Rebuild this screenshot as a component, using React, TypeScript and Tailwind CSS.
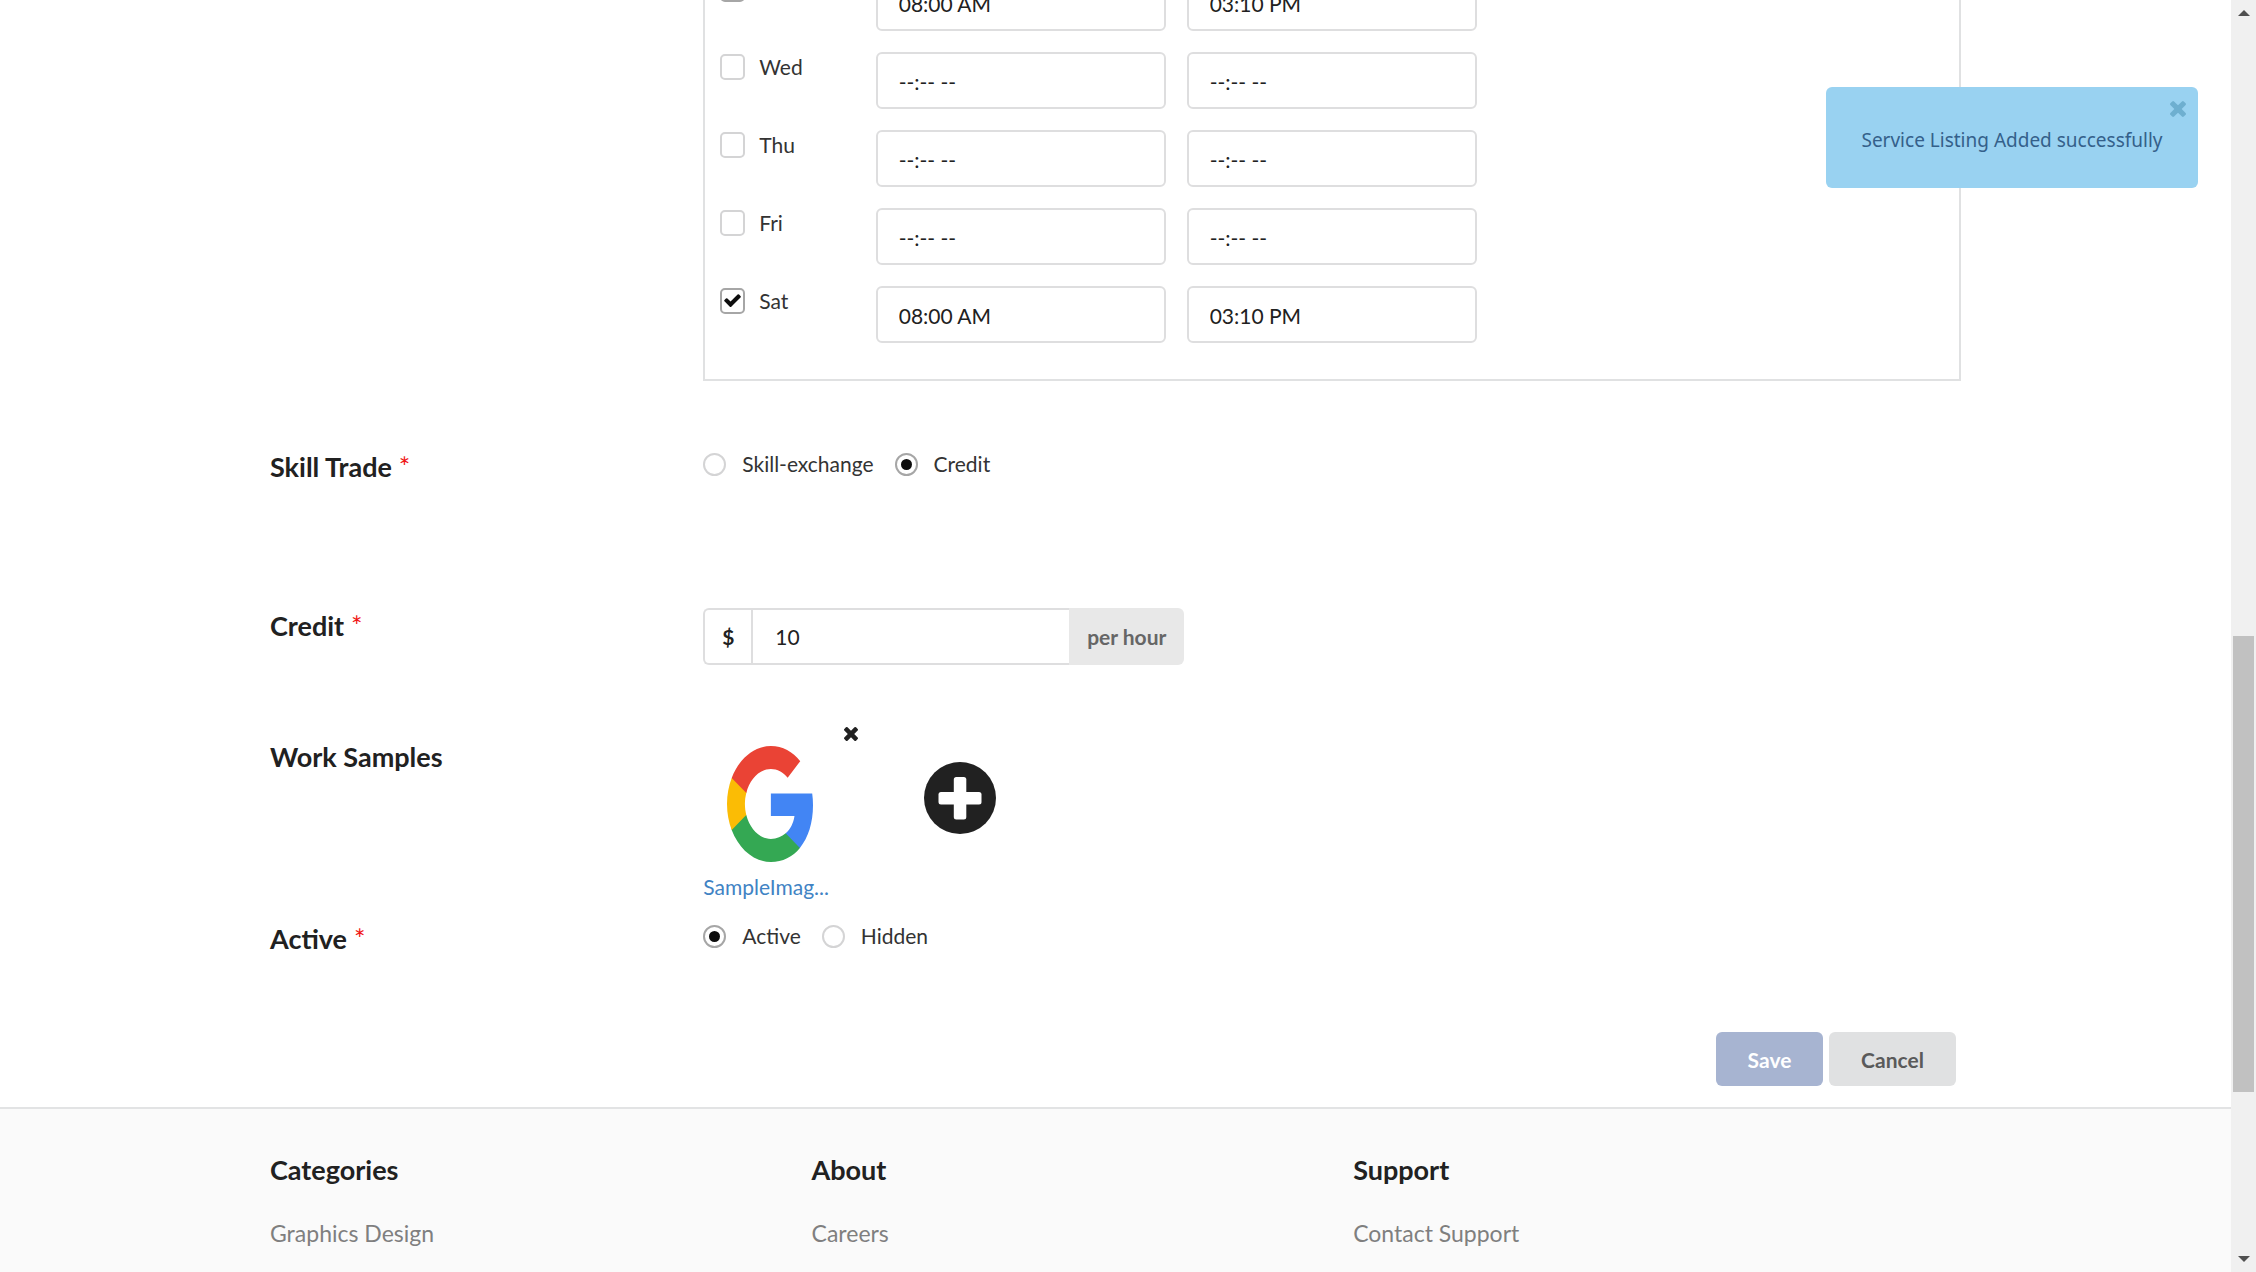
import { useState, type ReactNode } from "react";

function TimesIcon({ className }: { className: string }) {
  return (
    <svg viewBox="302 366 1188 1188" className={className} fill="currentColor" aria-hidden="true">
      <path d="M1490 1322q0 40-28 68l-136 136q-28 28-68 28t-68-28l-294-294-294 294q-28 28-68 28t-68-28l-136-136q-28-28-28-68t28-68l294-294-294-294q-28-28-28-68t28-68l136-136q28-28 68-28t68 28l294 294 294-294q28-28 68-28t68 28l136 136q28 28 28 68t-28 68l-294 294 294 294q28 28 28 68z" />
    </svg>
  );
}

function CheckIcon({ className }: { className: string }) {
  return (
    <svg viewBox="121 309 1550 1213" className={className} fill="currentColor" aria-hidden="true">
      <path d="M1671 566q0 40-28 68l-724 724-136 136q-28 28-68 28t-68-28l-136-136-362-362q-28-28-28-68t28-68l136-136q28-28 68-28t68 28l294 295 656-657q28-28 68-28t68 28l136 136q28 28 28 68z" />
    </svg>
  );
}

function GoogleLogo() {
  return (
    <svg viewBox="1 1 21.56 22" preserveAspectRatio="none" className="h-[116px] w-[86px]" role="img" aria-label="Sample image">
      <path fill="#4285f4" d="M22.56 12.25c0-.78-.07-1.53-.2-2.25H12v4.26h5.92c-.26 1.37-1.04 2.53-2.21 3.31v2.77h3.57c2.08-1.92 3.28-4.74 3.28-8.09z" />
      <path fill="#34a853" d="M12 23c2.97 0 5.46-.98 7.28-2.66l-3.57-2.77c-.98.66-2.23 1.06-3.71 1.06-2.86 0-5.29-1.93-6.16-4.53H2.18v2.84C3.99 20.53 7.7 23 12 23z" />
      <path fill="#fbbc05" d="M5.84 14.09c-.22-.66-.35-1.36-.35-2.09s.13-1.43.35-2.09V7.07H2.18C1.43 8.55 1 10.22 1 12s.43 3.45 1.18 4.93l2.85-2.22.81-.62z" />
      <path fill="#ea4335" d="M12 5.38c1.62 0 3.06.56 4.21 1.64l3.15-3.15C17.45 2.09 14.97 1 12 1 7.7 1 3.99 3.47 2.18 7.07l3.66 2.84c.87-2.6 3.3-4.53 6.16-4.53z" />
    </svg>
  );
}

function PlusCircle() {
  return (
    <svg viewBox="0 0 72 72" className="size-[72px]" aria-hidden="true">
      <circle cx="36" cy="36" r="36" fill="#212121" />
      <rect x="14.5" y="30" width="43" height="12.5" rx="2.5" fill="#fff" />
      <rect x="29.8" y="15" width="12.5" height="42.5" rx="2.5" fill="#fff" />
    </svg>
  );
}

type Day = { name: string; start: string; end: string; on: boolean };

const days: Day[] = [
  { name: "Tue", start: "08:00 AM", end: "03:10 PM", on: true },
  { name: "Wed", start: "--:-- --", end: "--:-- --", on: false },
  { name: "Thu", start: "--:-- --", end: "--:-- --", on: false },
  { name: "Fri", start: "--:-- --", end: "--:-- --", on: false },
  { name: "Sat", start: "08:00 AM", end: "03:10 PM", on: true },
];

const inputClass =
  "h-[57px] w-full min-w-0 rounded-md border-2 border-[#dededf] bg-white px-[21px] pt-[2px] text-[21px] text-[#212121] outline-none";

function DayRow({ day }: { day: Day }) {
  const [on, setOn] = useState(day.on);
  return (
    <div className="grid grid-cols-8 gap-x-[21px]">
      <label className="mt-[2px] flex h-[26px] items-center gap-[14px] text-[#333333]">
        <span className="relative flex">
          <input
            type="checkbox"
            checked={on}
            onChange={() => setOn(!on)}
            className="h-[26px] w-[25px] appearance-none rounded-[5px] border-2 border-[#d4d4d5] bg-white checked:border-[#a6a6a6]"
          />
          {on && <CheckIcon className="pointer-events-none absolute top-[6px] left-1 h-[13px] w-[17px] text-[#0d0d0d]" />}
        </span>
        {day.name}
      </label>
      <input aria-label={`${day.name} start time`} defaultValue={day.start} className={`col-span-2 ${inputClass}`} />
      <input aria-label={`${day.name} end time`} defaultValue={day.end} className={`col-span-2 ${inputClass}`} />
    </div>
  );
}

function Radios({ name, options, initial }: { name: string; options: string[]; initial: string }) {
  const [value, setValue] = useState(initial);
  return (
    <div className="flex gap-[21px] text-[#333333]" role="radiogroup" aria-label={name}>
      {options.map((option) => (
        <label key={option} className="flex h-6 items-center gap-4 leading-6">
          <span className="relative flex">
            <input
              type="radio"
              name={name}
              checked={value === option}
              onChange={() => setValue(option)}
              className="size-[23px] appearance-none rounded-full border-2 border-[#d4d4d5] bg-white checked:border-[#a6a6a6]"
            />
            {value === option && (
              <span className="pointer-events-none absolute inset-[6px] rounded-full bg-[#0d0d0d]" />
            )}
          </span>
          {option}
        </label>
      ))}
    </div>
  );
}

function Field({
  title,
  required,
  className,
  titleClass = "",
  children,
}: {
  title: string;
  required?: boolean;
  className: string;
  titleClass?: string;
  children: ReactNode;
}) {
  return (
    <section className={`grid grid-cols-4 gap-x-[42px] ${className}`}>
      <h3 className={`text-[27px] leading-9 font-bold ${titleClass}`}>
        {title}
        {required && <span className="font-normal text-[#f01414]"> *</span>}
      </h3>
      <div className="col-span-3">{children}</div>
    </section>
  );
}

const footerColumns = [
  { title: "Categories", link: "Graphics Design" },
  { title: "About", link: "Careers" },
  { title: "Support", link: "Contact Support" },
];

function ScrollBar() {
  return (
    <div className="flex w-[25px] shrink-0 flex-col items-center bg-[#f0f0f0]" aria-hidden="true">
      <svg viewBox="0 0 12 6" className="mt-[10px] h-[6px] w-3">
        <path d="M6 0 12 6H0z" fill="#505050" />
      </svg>
      <div className="grow-[620]" />
      <div className="w-[21px] grow-[456] bg-[#c1c1c1]" />
      <div className="grow-[164]" />
      <svg viewBox="0 0 12 6" className="mb-[10px] h-[6px] w-3">
        <path d="M0 0H12L6 6z" fill="#505050" />
      </svg>
    </div>
  );
}

export default function App() {
  const [toast, setToast] = useState(true);
  return (
    <div className="flex h-screen overflow-hidden bg-white font-['Lato',sans-serif] text-[21px] leading-6 text-[#212121]">
      <div className="flex min-w-0 grow flex-col overflow-hidden">
        <main className="mx-[270px]">
          <div className="-mt-[26px] grid grid-cols-4 gap-x-[42px]">
            <div className="col-span-3 col-start-2 flex flex-col gap-[21px] border-2 border-t-0 border-[#e0e1e2] pr-4 pb-9 pl-[15px]">
              {days.map((day) => (
                <DayRow key={day.name} day={day} />
              ))}
            </div>
          </div>

          <Field title="Skill Trade" required className="mt-[68px]">
            <div className="pt-[3px]">
              <Radios name="Skill Trade" options={["Skill-exchange", "Credit"]} initial="Credit" />
            </div>
          </Field>

          <Field title="Credit" required className="mt-[123px]">
            <div className="flex h-[57px] w-[481px]">
              <label
                htmlFor="credit"
                className="flex w-12 items-center justify-center rounded-l-md border-2 border-r-0 border-[#dededf] font-bold"
              >
                $
              </label>
              <input
                id="credit"
                defaultValue="10"
                className="min-w-0 grow border-2 border-r-0 border-[#dededf] px-[22px] text-[21px] outline-none"
              />
              <span className="flex w-[115px] items-center justify-center rounded-r-md bg-[#e8e8e8] font-bold text-[#666666]">
                per hour
              </span>
            </div>
          </Field>

          <Field title="Work Samples" className="mt-[62px]" titleClass="pt-3">
            <div className="flex items-start gap-[66px] pb-[21px]">
              <div className="flex w-[155px] flex-col">
                <button type="button" aria-label="Remove sample" className="self-end">
                  <TimesIcon className="size-[14px]" />
                </button>
                <div className="mt-[5px] ml-6">
                  <GoogleLogo />
                </div>
                <a href="#sample" className="mt-[13px] text-[#4183c4]">
                  SampleImag...
                </a>
              </div>
              <button type="button" aria-label="Add sample" className="mt-[35px]">
                <PlusCircle />
              </button>
            </div>
          </Field>

          <Field title="Active" required className="" titleClass="pt-px">
            <div className="pt-1">
              <Radios name="Active" options={["Active", "Hidden"]} initial="Active" />
            </div>
          </Field>

          <div className="mt-[75px] mr-[5px] mb-[21px] flex justify-end gap-[6px] font-bold">
            <button type="button" className="h-[54px] w-[107px] rounded-md bg-[#a7b4d1] pt-[2px] text-white">
              Save
            </button>
            <button type="button" className="h-[54px] w-[127px] rounded-md bg-[#e0e1e2] pt-[2px] text-[#5a5a5a]">
              Cancel
            </button>
          </div>
        </main>

        <footer className="grow border-t-2 border-[#e2e3e4] bg-[#fafafa] px-[270px] pt-[43px]">
          <div className="grid grid-cols-16 gap-x-[42px]">
            {footerColumns.map((column) => (
              <nav key={column.title} className="col-span-5" aria-label={column.title}>
                <h4 className="text-[27px] leading-9 font-bold">{column.title}</h4>
                <a href="#footer" className="mt-[29px] block text-[23px] leading-8 text-[#7f7f7f]">
                  {column.link}
                </a>
              </nav>
            ))}
          </div>
        </footer>
      </div>

      <ScrollBar />

      {toast && (
        <div
          role="status"
          className="absolute top-[87px] right-[58px] flex h-[101px] w-[372px] items-center justify-center rounded-md bg-[#99d2f1] pt-1 font-['Noto_Sans',sans-serif] text-[19px] whitespace-nowrap text-[#34608a]"
        >
          Service Listing Added successfully
          <button
            type="button"
            aria-label="Close"
            onClick={() => setToast(false)}
            className="absolute top-[14px] right-3 text-[#6eafd0]"
          >
            <TimesIcon className="size-4" />
          </button>
        </div>
      )}
    </div>
  );
}
